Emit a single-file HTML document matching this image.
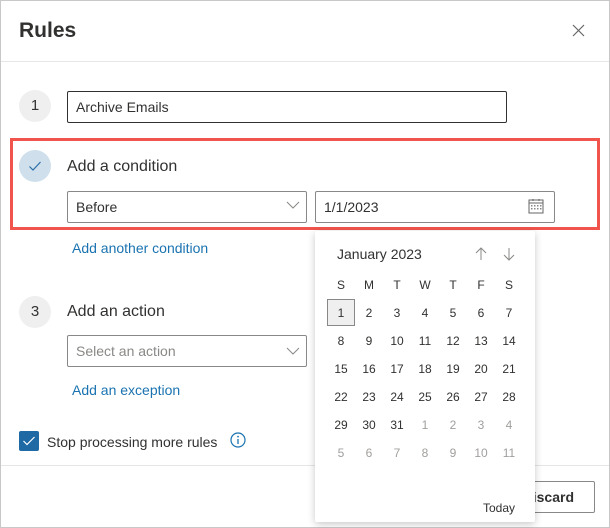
<!DOCTYPE html>
<html><head><style>
*{box-sizing:border-box;margin:0;padding:0}
body{width:610px;height:528px;background:#fff;font-family:"Liberation Sans",sans-serif;color:#323130;position:relative;overflow:hidden}
.a{position:absolute}
.frame{left:0;top:0;width:610px;height:528px;border:1px solid #c8c8c8}
.circ{width:32px;height:32px;border-radius:50%;background:#efefef;text-align:center;line-height:32px;font-size:15px;color:#333}
.inp{border:1px solid #8a8886;border-radius:2px;height:32px;font-size:14px;line-height:30px;padding-left:8px}
.lbl{font-size:16px;color:#323130}
.link{font-size:14px;color:#1a73b0}
.cal{left:315px;top:231px;width:220px;height:291px;background:#fff;box-shadow:0 2px 8px rgba(0,0,0,.22);border-radius:2px}
.d{position:absolute;width:28px;text-align:center;font-size:12px;color:#323130}
.g{color:#a19f9d}
</style></head><body>
<div class="a frame"></div>
<div class="a" style="left:19px;top:19px;font-size:21px;font-weight:bold;color:#323130">Rules</div>
<svg class="a" style="left:572px;top:24px" width="13" height="13"><path d="M1 1L12 12M12 1L1 12" stroke="#666" stroke-width="1.2"/></svg>
<div class="a" style="left:1px;top:61px;width:608px;height:1px;background:#e6e6e6"></div>

<div class="a circ" style="left:19px;top:90px">1</div>
<div class="a inp" style="left:67px;top:91px;width:440px;border-color:#323130">Archive Emails</div>

<div class="a" style="left:10px;top:138px;width:590px;height:92px;border:3px solid #f0544c"></div>
<div class="a circ" style="left:19px;top:150px;background:#cfe0ec"></div>
<svg class="a" style="left:28px;top:160px" width="14" height="12"><path d="M1.5 6.5L5 10L12.5 2" stroke="#2b6ea8" stroke-width="1.2" fill="none"/></svg>
<div class="a lbl" style="left:67px;top:158px">Add a condition</div>
<div class="a inp" style="left:67px;top:191px;width:240px">Before</div>
<svg class="a" style="left:286px;top:201px" width="14" height="9"><path d="M1 1L7 7L13 1" stroke="#8a8886" stroke-width="1" fill="none"/></svg>
<div class="a inp" style="left:315px;top:191px;width:240px">1/1/2023</div>
<svg class="a" style="left:528px;top:198px" width="16" height="16"><rect x="1" y="2" width="14" height="13" fill="none" stroke="#666"/><path d="M1 5H15M5 1V3M11 1V3" stroke="#666"/><g fill="#888"><rect x="3" y="7" width="1.5" height="1.5"/><rect x="6" y="7" width="1.5" height="1.5"/><rect x="9" y="7" width="1.5" height="1.5"/><rect x="12" y="7" width="1.5" height="1.5"/><rect x="3" y="10" width="1.5" height="1.5"/><rect x="6" y="10" width="1.5" height="1.5"/><rect x="9" y="10" width="1.5" height="1.5"/><rect x="12" y="10" width="1.5" height="1.5"/></g></svg>
<div class="a link" style="left:72px;top:240px">Add another condition</div>

<div class="a circ" style="left:19px;top:296px">3</div>
<div class="a lbl" style="left:67px;top:303px">Add an action</div>
<div class="a inp" style="left:67px;top:335px;width:240px;color:#8a8886">Select an action</div>
<svg class="a" style="left:286px;top:347px" width="14" height="9"><path d="M1 1L7 7L13 1" stroke="#8a8886" stroke-width="1" fill="none"/></svg>
<div class="a link" style="left:72px;top:382px">Add an exception</div>
<div class="a" style="left:19px;top:431px;width:20px;height:20px;background:#1f6aa5;border-radius:2px"></div>
<svg class="a" style="left:22px;top:435px" width="14" height="12"><path d="M1.5 6L5 9.5L12.5 2" stroke="#fff" stroke-width="1.2" fill="none"/></svg>
<div class="a" style="left:47px;top:434px;font-size:14px">Stop processing more rules</div>
<svg class="a" style="left:230px;top:432px" width="16" height="16"><circle cx="8" cy="8" r="7" fill="none" stroke="#1a73b0" stroke-width="1.2"/><path d="M8 7V12" stroke="#1a73b0" stroke-width="1.3"/><circle cx="8" cy="4.6" r=".9" fill="#1a73b0"/></svg>
<div class="a" style="left:1px;top:465px;width:608px;height:1px;background:#e6e6e6"></div>
<div class="a" style="left:490px;top:481px;width:105px;height:32px;border:1px solid #8a8886;border-radius:2px;font-size:14px;font-weight:bold;line-height:30px;text-align:right;padding-right:20px">Discard</div>

<div class="a cal">
<div class="a" style="left:22px;top:15px;font-size:14px;color:#323130">January 2023</div>
<svg class="a" style="left:160px;top:16px" width="12" height="14"><path d="M6 13V1M1 6L6 1L11 6" stroke="#8a8886" fill="none"/></svg>
<svg class="a" style="left:188px;top:16px" width="12" height="14"><path d="M6 1V13M1 8L6 13L11 8" stroke="#8a8886" fill="none"/></svg>
<div class="a" style="left:12px;top:68px;width:28px;height:27px;background:#efefef;border:1px solid #8a8886"></div>
<div id="grid"></div>
<div class="a" style="left:168px;top:270px;font-size:12px;color:#323130">Today</div>
</div>
<script>
var g=document.getElementById('grid'),h='';
var hd=['S','M','T','W','T','F','S'];
for(var i=0;i<7;i++)h+='<div class="d" style="left:'+(12+i*28)+'px;top:47px">'+hd[i]+'</div>';
var days=[];for(var i=1;i<=31;i++)days.push([i,0]);for(var i=1;i<=11;i++)days.push([i,1]);
for(var k=0;k<days.length;k++){var r=Math.floor(k/7),c=k%7;
h+='<div class="d'+(days[k][1]?' g':'')+'" style="left:'+(12+c*28)+'px;top:'+(75+r*28)+'px">'+days[k][0]+'</div>';}
g.innerHTML=h;
</script>
</body></html>
